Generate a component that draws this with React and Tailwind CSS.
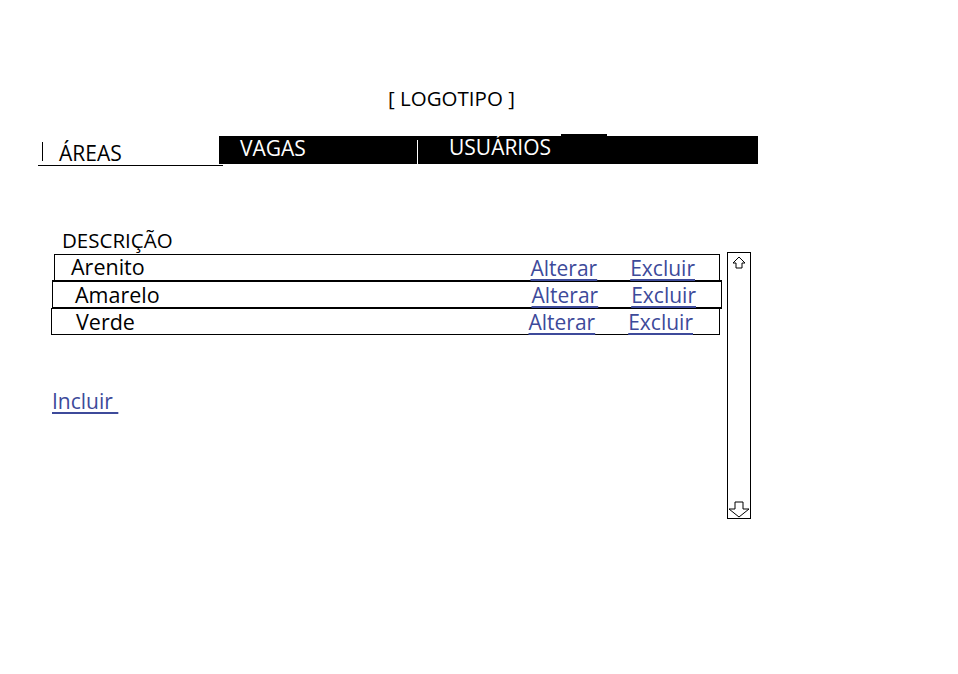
import React from "react";

const font = { fontFamily: '"Open Sans", "Noto Sans", sans-serif' };

function Row({ name, nameMl, className, linksMl, textMt }) {
  return (
    <div className={`flex items-center ${className}`}>
      <span className={`${nameMl} ${textMt} text-[21.5px] text-black leading-[20px]`}>{name}</span>
      <span className={`${linksMl} ml-auto flex text-[21px] leading-[20px] text-[#3d4a9a]`}>
        <span className="underline decoration-[1.5px] underline-offset-[3px]">Alterar</span>
        <span className="ml-[33px] underline decoration-[1.5px] underline-offset-[3px] pr-[24px]">Excluir</span>
      </span>
    </div>
  );
}

export default function App() {
  return (
    <div className="w-[958px] h-[674px] bg-white text-black" style={font}>
      <div className="pt-[86px] pl-[388px] text-[20.5px] leading-[24px]">[ LOGOTIPO ]</div>
      <div className="mt-[26px] flex items-end pl-[38px]">
        <div className="w-[185px] h-[30px] border-b border-black flex items-center">
          <span className="ml-[4px] mt-[2px] w-px h-[19px] bg-black" />
          <span className="ml-[16px] text-[21px] leading-none mt-[5px]">ÁREAS</span>
        </div>
        <div className="-ml-[4px] mb-[2px] w-[539px] h-[28px] bg-black flex relative">
          <span className="absolute left-[342px] -top-[2px] w-[46px] h-[2px] bg-black" />
          <div className="w-[199px] border-r border-white mt-[4px] flex items-start">
            <span className="ml-[21px] -mt-[4px] text-white text-[21px] leading-[24px]">VAGAS</span>
          </div>
          <div className="flex items-start">
            <span className="ml-[31px] -mt-[1px] text-white text-[21px] leading-[24px]">USUÁRIOS</span>
          </div>
        </div>
      </div>
      <div className="flex mt-[62px]">
        <div className="ml-[51px] w-[671px]">
          <div className="mt-[2px] ml-[11px] text-[20.5px] leading-[20px]">DESCRIÇÃO</div>
          <div className="mt-[4px] ml-[3px] w-[666px] border border-black">
            <Row name="Arenito" nameMl="ml-[16px]" textMt="-mt-[2px]" className="h-[25px]" linksMl="" />
          </div>
          <div className="ml-[1px] w-[670px] border-y-2 border-x border-black -mt-px">
            <Row name="Amarelo" nameMl="ml-[22px]" textMt="mt-[1px]" className="h-[25px]" linksMl="mr-[1px]" />
          </div>
          <div className="w-[669px] border border-black -mt-px">
            <Row name="Verde" nameMl="ml-[24px]" textMt="" className="h-[25px]" linksMl="mr-[2px]" />
          </div>
          <div className="mt-[54px] ml-[1px] text-[21px] leading-[24px] text-[#3d4a9a] underline decoration-[1.5px] underline-offset-[3px]">
            Incluir&nbsp;
          </div>
        </div>
        <div className="ml-[5px] mt-[24px] w-[24px] h-[267px] border border-black flex flex-col justify-between items-center">
          <svg width="16" height="14" viewBox="0 0 16 14" className="mt-[3px]">
            <path d="M8 1 L14 7 L11 7 L11 12 L5 12 L5 7 L2 7 Z" fill="none" stroke="black" strokeWidth="1" />
          </svg>
          <svg width="22" height="17" viewBox="0 0 22 17">
            <path d="M7 1 L15 1 L15 8 L21 8 L11 16 L1 8 L7 8 Z" fill="none" stroke="black" strokeWidth="1" />
          </svg>
        </div>
      </div>
    </div>
  );
}
